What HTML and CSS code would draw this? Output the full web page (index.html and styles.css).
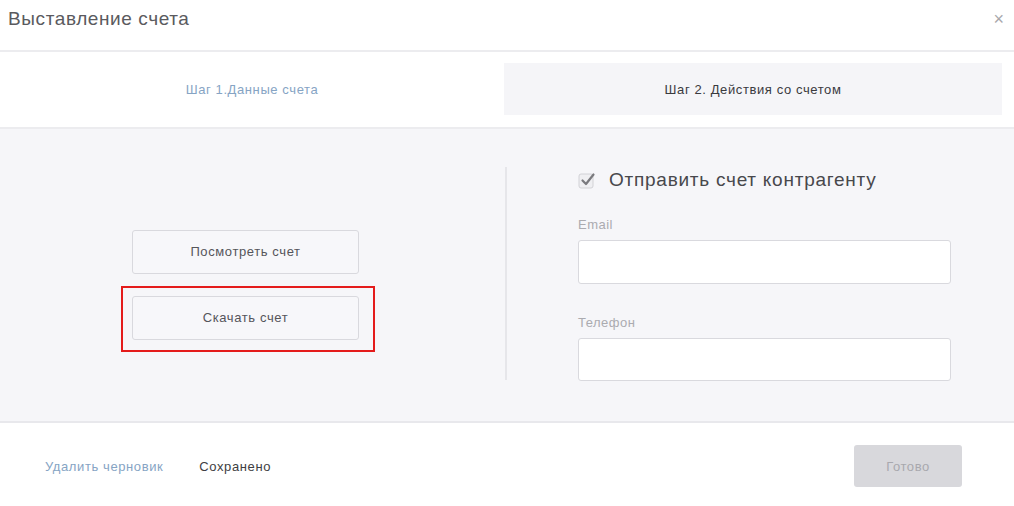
FILE: index.html
```html
<!DOCTYPE html>
<html lang="ru">
<head>
<meta charset="utf-8">
<title>Выставление счета</title>
<link rel="stylesheet" href="styles.css">
</head>
<body>
<div class="modal">
  <div class="header">
    <h1 class="title">Выставление счета</h1>
    <span class="close">×</span>
  </div>
  <div class="tabs">
    <div class="tab tab-done">Шаг 1.Данные счета</div>
    <div class="tab tab-active">Шаг 2. Действия со счетом</div>
  </div>
  <div class="content">
    <div class="left">
      <button class="btn">Посмотреть счет</button>
      <div class="highlight-wrap">
        <button class="btn">Скачать счет</button>
        <span class="highlight"></span>
      </div>
    </div>
    <div class="divider-col"><span class="divider"></span></div>
    <div class="right">
      <label class="check-row">
        <span class="checkbox">
          <svg width="20" height="18" viewBox="0 0 20 18"><rect x="1" y="3" width="14" height="14" rx="2" fill="#efeff2" stroke="#d2d2d6" stroke-width="1"/><path d="M4.5 9.5 L8 13 L15.5 3.5" fill="none" stroke="#7a7a7e" stroke-width="2.2" stroke-linecap="round" stroke-linejoin="round"/></svg>
        </span>
        <span class="check-text">Отправить счет контрагенту</span>
      </label>
      <div class="field field-email">
        <div class="field-label">Email</div>
        <div class="input"></div>
      </div>
      <div class="field field-phone">
        <div class="field-label">Телефон</div>
        <div class="input input-phone"></div>
      </div>
    </div>
  </div>
  <div class="footer">
    <span class="link">Удалить черновик</span>
    <span class="saved">Сохранено</span>
    <button class="btn-done">Готово</button>
  </div>
</div>
</body>
</html>
```

FILE: styles.css
```css
* { box-sizing: border-box; }
html, body { margin: 0; padding: 0; }
body {
  width: 1014px;
  height: 506px;
  overflow: hidden;
  background: #ffffff;
  font-family: "Liberation Sans", Arial, sans-serif;
}
.modal { width: 1014px; height: 506px; display: flex; flex-direction: column; }
.header {
  height: 52px;
  border-bottom: 2px solid #ececef;
  display: flex;
  align-items: flex-start;
  justify-content: space-between;
  padding: 7px 10px 0 8px;
}
.title {
  margin: 0;
  font-size: 19px;
  letter-spacing: 0.6px;
  font-weight: normal;
  color: #5a5a5e;
  line-height: 24px;
}
.close {
  font-size: 18px;
  color: #a8a8ac;
  line-height: 22px;
  margin-top: 1px;
}
.tabs {
  height: 77px;
  border-bottom: 2px solid #ececef;
  display: grid;
  grid-template-columns: 504px 498px;
  padding: 11px 0 12px 0;
}
.tab {
  display: flex;
  align-items: center;
  justify-content: center;
  font-size: 13px;
  letter-spacing: 0.6px;
}
.tab-done { color: #86a4c4; }
.tab-active { background: #f5f5f8; color: #3a3a3e; }
.content {
  height: 294px;
  background: #f6f6f9;
  border-bottom: 2px solid #e8e8ec;
  display: grid;
  grid-template-columns: 505px 2px 1fr;
}
.left {
  display: flex;
  flex-direction: column;
  gap: 22px;
  padding: 101px 0 0 132px;
}
.btn {
  width: 227px;
  height: 44px;
  background: #f7f7fa;
  border: 1px solid #d9d9de;
  border-radius: 3px;
  font-family: inherit;
  font-size: 13px;
  letter-spacing: 0.6px;
  color: #55555a;
  padding: 0 0 2px 0;
}
.highlight-wrap { position: relative; width: 227px; height: 44px; }
.highlight {
  position: absolute;
  left: -11px;
  top: -10px;
  width: 254px;
  height: 66px;
  border: 2px solid #e41b1b;
}
.divider-col { padding-top: 38px; }
.divider { display: block; width: 2px; height: 213px; background: #e6e6ea; }
.right { padding: 39px 0 0 71px; }
.check-row { display: flex; align-items: center; height: 24px; }
.checkbox { width: 31px; display: flex; }
.check-text { font-size: 19px; letter-spacing: 0.75px; color: #48484c; }
.field-label {
  font-size: 13px;
  letter-spacing: 0.5px;
  color: #ababb0;
  line-height: 16px;
  margin-bottom: 7px;
}
.field-email { margin-top: 25px; }
.field-phone { margin-top: 31px; }
.input {
  width: 373px;
  height: 44px;
  background: #ffffff;
  border: 1px solid #d9d9de;
  border-radius: 3px;
}
.input-phone { height: 43px; }
.footer {
  flex: 1;
  display: flex;
  align-items: center;
  padding: 3px 52px 0 45px;
  font-size: 13px;
  letter-spacing: 0.6px;
}
.link { color: #86a4c4; }
.saved { color: #3e3e42; margin-left: 36px; }
.btn-done {
  margin-left: auto;
  width: 108px;
  height: 42px;
  background: #d8d8dc;
  border: none;
  border-radius: 3px;
  font-family: inherit;
  font-size: 13px;
  letter-spacing: 0.6px;
  color: #a8a8ae;
}
```
